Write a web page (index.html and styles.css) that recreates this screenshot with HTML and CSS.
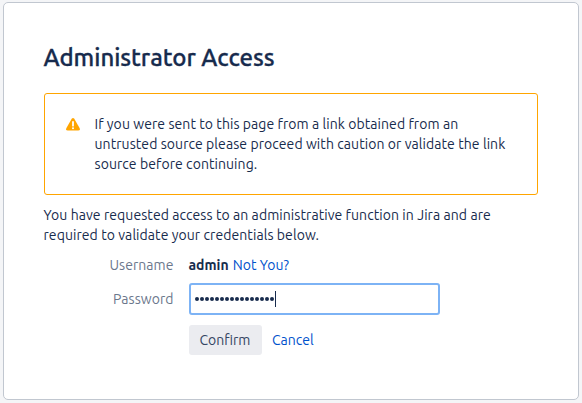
FILE: index.html
```html
<!DOCTYPE html>
<html lang="en">
<head>
<meta charset="utf-8">
<title>Administrator Access</title>
<link rel="stylesheet" href="styles.css">
</head>
<body>
<main class="card">
  <h1>Administrator Access</h1>
  <section class="warning">
    <svg class="warning-icon" width="14" height="13" viewBox="0 0 14 13">
      <path d="M5.7.8Q7-.7 8.3.8L13.7 10.2Q14.4 12.5 12.2 12.5H1.8Q-.4 12.5.3 10.2Z" fill="#ffa500"/>
      <path d="M7 4v3.7" stroke="#fff" stroke-width="1.8" stroke-linecap="round"/>
      <circle cx="7" cy="10.2" r="1" fill="#fff"/>
    </svg>
    <p>If you were sent to this page from a link obtained from an<br>untrusted source please proceed with caution or validate the link<br>source before continuing.</p>
  </section>
  <p class="intro">You have requested access to an administrative function in Jira and are<br>required to validate your credentials below.</p>
  <form class="form">
    <label>Username</label>
    <div class="user"><strong>admin</strong><a>Not You?</a></div>
    <label>Password</label>
    <div class="field"><span class="dots"><i></i><i></i><i></i><i></i><i></i><i></i><i></i><i></i><i></i><i></i><i></i><i></i><i></i><i></i><i></i><i></i></span><span class="caret"></span></div>
    <div class="actions"><button type="button">Confirm</button><a>Cancel</a></div>
  </form>
</main>
</body>
</html>
```
FILE: styles.css
```css
* { box-sizing: border-box; }
body {
  margin: 0;
  padding: 2px 3px 3px;
  height: 403px;
  overflow: hidden;
  background: #f4f5f7;
  color: #172b4d;
  font: 14px/20px Ubuntu, "Noto Sans", sans-serif;
  white-space: nowrap;
}
.card {
  width: 576px;
  height: 398px;
  padding: 41px 40px 0 39.5px;
  background: #fff;
  border: 1px solid #c1c7d0;
  border-radius: 5px;
}
h1 {
  margin: 0 0 21px;
  font-size: 24px;
  line-height: 28px;
  font-weight: 500;
  letter-spacing: -0.06px;
  -webkit-text-stroke: 0.3px #172b4d;
}
.warning {
  display: flex;
  width: 494px;
  height: 102px;
  padding: 20px;
  border: 1px solid #ffa500;
  border-radius: 3px;
}
.warning-icon { margin: 4px 15px 0 1px; }
p { margin: 0; letter-spacing: 0.07px; }
.intro { margin-top: 10px; }
.form {
  display: grid;
  grid-template-columns: 130px 251px;
  grid-template-rows: 20px 32px 30px;
  column-gap: 15px;
  row-gap: 8px;
  margin-top: 10px;
  align-items: center;
}
label { text-align: right; letter-spacing: 0.05px; color: #6b778c; }
.user { display: flex; gap: 4px; }
.user a { letter-spacing: 0.05px; }
a { color: #0052cc; }
.field {
  display: flex;
  align-items: center;
  height: 32px;
  padding-left: 4.4px;
  border: 2px solid #7db3f5;
  border-radius: 3px;
}
.dots { display: flex; gap: 1.03px; }
.dots i { width: 4px; height: 4px; border-radius: 50%; background: #172b4d; }
.caret { width: 1px; height: 16px; margin-left: 1px; background: #172b4d; }
.actions { grid-column: 2; display: flex; align-items: center; gap: 10.5px; margin-top: 4px; }
button {
  width: 73px;
  height: 30px;
  padding: 0;
  border: 0;
  border-radius: 3px;
  background: #ebecf0;
  color: #344563;
  font: inherit;
}
```
